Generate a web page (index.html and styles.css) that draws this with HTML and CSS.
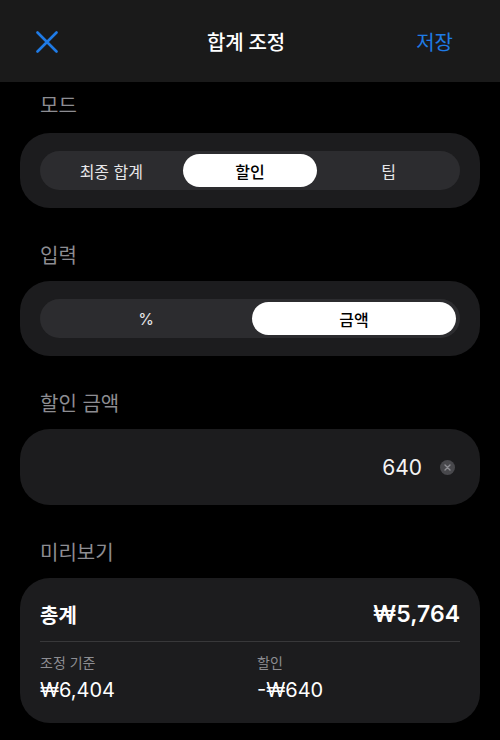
FILE: index.html
```html
<!DOCTYPE html>
<html lang="ko">
<head>
    <meta charset="UTF-8">
    <meta name="viewport" content="width=device-width, initial-scale=1.0">
    <title>합계 조정</title>
    <link rel="stylesheet" href="styles.css">
</head>
<body>

<header class="topbar">
    <button class="icon-btn" aria-label="닫기">
        <svg width="22" height="22" viewBox="0 0 22 22">
            <path d="M1.5 1.5 L20.5 20.5 M20.5 1.5 L1.5 20.5" stroke="currentColor" stroke-width="2.6" stroke-linecap="round"/>
        </svg>
    </button>
    <h1 class="title">합계 조정</h1>
    <button class="save-btn">저장</button>
</header>

<main class="content">
    <div class="section-label first">모드</div>
    <div class="card">
        <div class="segmented three">
            <span class="segment">최종 합계</span>
            <span class="segment selected">할인</span>
            <span class="segment">팁</span>
        </div>
    </div>

    <div class="section-label">입력</div>
    <div class="card">
        <div class="segmented two">
            <span class="segment">%</span>
            <span class="segment selected">금액</span>
        </div>
    </div>

    <div class="section-label">할인 금액</div>
    <div class="card input-card">
        <span class="amount">640</span>
        <span class="clear-btn">
            <svg width="15" height="15" viewBox="0 0 15 15">
                <circle cx="7.5" cy="7.5" r="7.5" fill="#48484c"/>
                <path d="M5 5 L10 10 M10 5 L5 10" stroke="#8e8e93" stroke-width="1.4" stroke-linecap="round"/>
            </svg>
        </span>
    </div>

    <div class="section-label">미리보기</div>
    <div class="card preview">
        <div class="total-row">
            <span class="total-label">총계</span>
            <span class="total-value">₩5,764</span>
        </div>
        <div class="divider"></div>
        <div class="detail-grid">
            <div class="detail">
                <div class="detail-label">조정 기준</div>
                <div class="detail-value">₩6,404</div>
            </div>
            <div class="detail">
                <div class="detail-label">할인</div>
                <div class="detail-value">-₩640</div>
            </div>
        </div>
    </div>
</main>

</body>
</html>
```

FILE: styles.css
```css
body {
    font-family: Inter, 'Noto Sans CJK KR', sans-serif;
    background-color: #000;
    color: #fff;
    margin: 0;
}
button {
    font-family: inherit;
    background: none;
    border: none;
    padding: 0;
    cursor: pointer;
}
.topbar {
    height: 82px;
    background-color: #1a1a1a;
    display: grid;
    grid-template-columns: 1fr auto 1fr;
    align-items: center;
    padding: 0 47px 0 36px;
}
.icon-btn {
    color: #1f7be6;
    justify-self: start;
    display: flex;
    margin-top: 2px;
}
.title {
    margin: 0;
    font-size: 20px;
    font-weight: 500;
    letter-spacing: -0.2px;
    margin-left: 3px;
}
.save-btn {
    justify-self: end;
    color: #1f7be6;
    font-size: 20px;
    font-weight: 400;
}
.content {
    padding: 0 20px;
}
.section-label {
    color: #8d8d92;
    font-size: 20px;
    line-height: 24px;
    padding-left: 20px;
    margin: 36px 0 13px;
}
.section-label.first {
    margin-top: 12px;
    margin-bottom: 15px;
}
.card {
    background-color: #1c1c1e;
    border-radius: 30px;
    padding: 18px 20px;
}
.segmented {
    display: grid;
    background-color: #2c2c2f;
    border-radius: 20px;
    height: 39px;
    padding: 2px;
    box-sizing: border-box;
}
.segmented.three {
    grid-template-columns: repeat(3, 1fr);
}
.segmented.two {
    grid-template-columns: repeat(2, 1fr);
}
.segment {
    display: flex;
    align-items: center;
    justify-content: center;
    font-size: 16px;
    font-weight: 400;
    color: #e6e6e8;
    border-radius: 18px;
}
.segment.selected {
    background-color: #fff;
    color: #000;
    font-weight: 500;
    margin: 1px 2px;
}
.input-card {
    height: 76px;
    box-sizing: border-box;
    display: flex;
    align-items: center;
    justify-content: flex-end;
    gap: 18px;
    padding: 0 25px 0 20px;
}
.amount {
    font-size: 21px;
    color: #f4f4f4;
}
.clear-btn {
    display: flex;
}
.preview {
    padding: 18px 20px 20px;
}
.total-row {
    display: flex;
    justify-content: space-between;
    align-items: center;
    height: 36px;
}
.total-label {
    font-size: 20px;
    font-weight: 600;
}
.total-value {
    font-size: 23px;
    font-weight: 600;
}
.divider {
    height: 1px;
    background-color: #38383a;
    margin: 9px 0 12px;
}
.detail-grid {
    display: grid;
    grid-template-columns: 1fr 1fr;
    column-gap: 14px;
}
.detail-label {
    color: #8d8d92;
    font-size: 14px;
    line-height: 18px;
}
.detail-value {
    font-size: 20px;
    line-height: 26px;
    margin-top: 5px;
}
```
